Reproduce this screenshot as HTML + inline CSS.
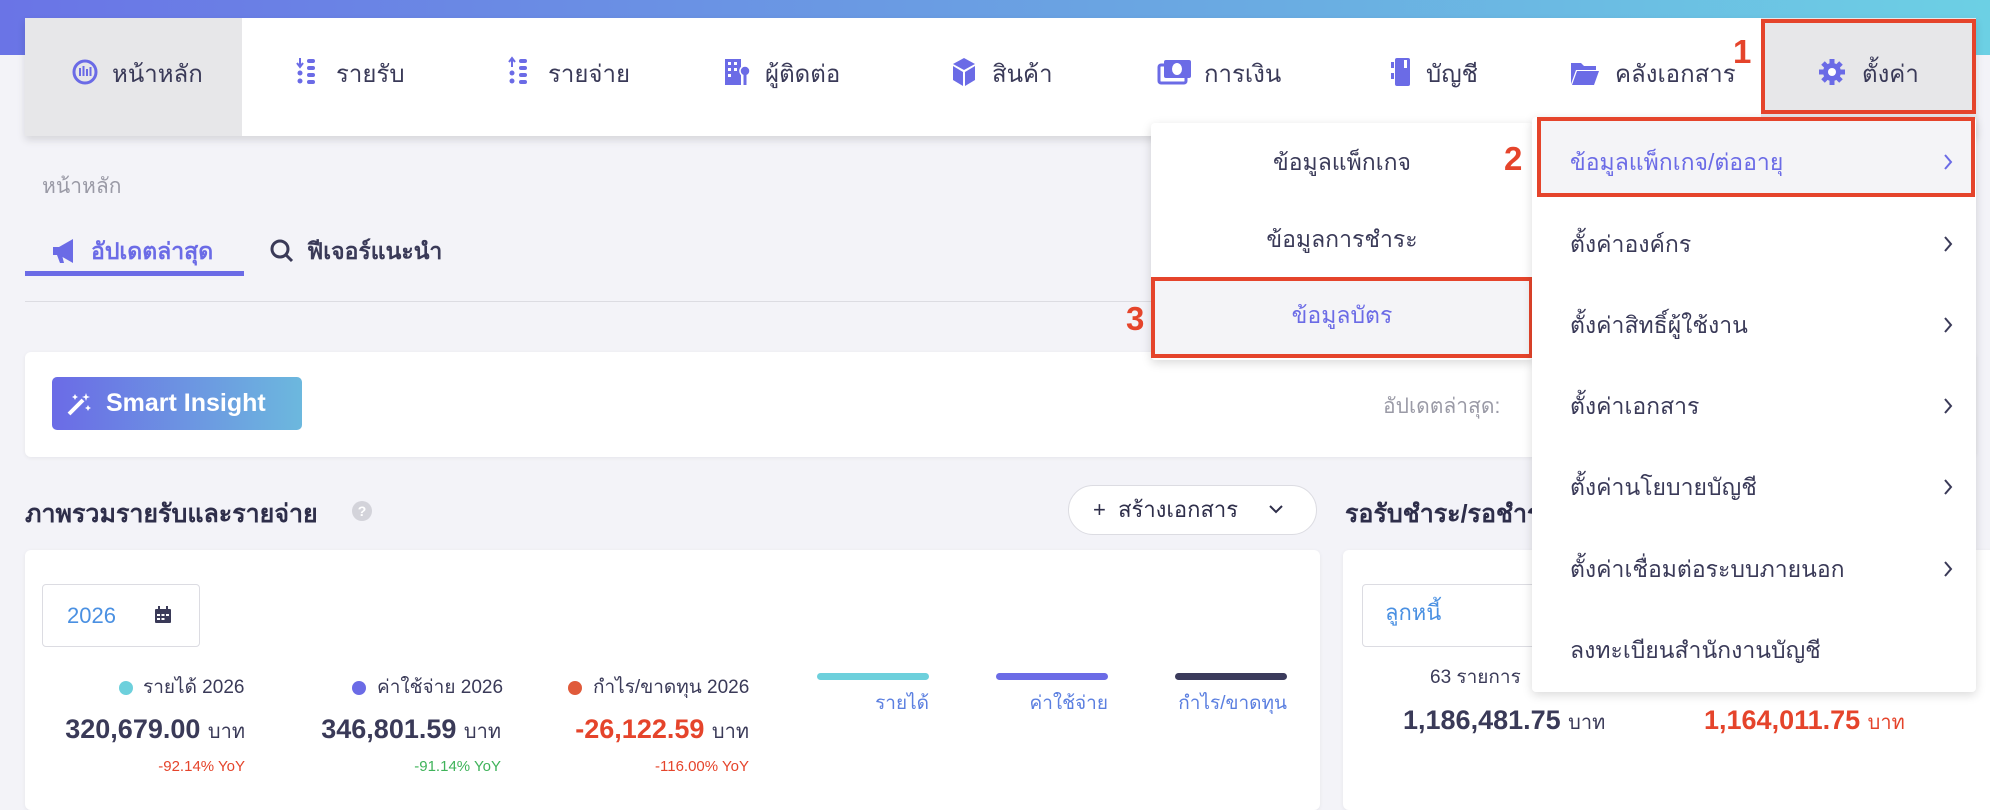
<!DOCTYPE html>
<html><head><meta charset="utf-8"><style>
*{box-sizing:border-box;margin:0;padding:0}
body{width:1990px;height:784px;overflow:hidden;background:#f3f3f8;font-family:"Liberation Sans","Noto Sans CJK SC",sans-serif;color:#3a3a58;position:relative}
.a{position:absolute}
.top{left:0;top:0;width:1990px;height:55px;background:linear-gradient(90deg,#6a74e6,#6aa8e2 60%,#6cd0e4)}
.nav{left:25px;top:18px;width:1951px;height:118px;background:#fff;box-shadow:0 4px 8px rgba(0,0,0,.12)}
.ni{top:57px;font-size:24px;line-height:36px;color:#3a3a58;white-space:nowrap}
.red{border:4px solid #e5442b}
.num{color:#e5442b;font-weight:bold;font-size:33px;line-height:33px}
.dd{background:#fff;box-shadow:0 3px 10px rgba(0,0,0,.15);border-radius:4px}
.mi{font-size:23px;color:#3a3a58;white-space:nowrap;line-height:32px}
.card{background:#fff;border-radius:6px;box-shadow:0 1px 4px rgba(0,0,0,.06)}
.lbl{font-size:19px;color:#3a3a58;white-space:nowrap;line-height:24px}
.val{font-size:27px;font-weight:bold;color:#3a3a58;white-space:nowrap;line-height:32px}
.val span{font-weight:normal;font-size:20px}
.yoy{font-size:15px;white-space:nowrap;line-height:20px}
.dot{width:14px;height:14px;border-radius:50%}
.cv{position:absolute;left:1942px;width:12px;height:20px}
</style></head><body>
<div class="a top"></div>
<div class="a nav"></div>
<div class="a" style="left:25px;top:18px;width:217px;height:118px;background:#e7e7e9"></div>
<div class="a" style="left:1761px;top:18px;width:215px;height:118px;background:#e7e7e9"></div>

<svg class="a" style="left:71px;top:56px" width="28" height="32" viewBox="0 0 28 32"><circle cx="14" cy="16" r="11" fill="none" stroke="#6b6be6" stroke-width="3"/><path d="M9 12v8M12.5 10v10M16 13v7M19.5 11v9" stroke="#6b6be6" stroke-width="2"/></svg>
<svg class="a" style="left:296px;top:56px" width="22" height="32" viewBox="0 0 22 32"><path d="M4 2v8M1 7l3 4 3-4" stroke="#6b6be6" stroke-width="2" fill="none"/><g fill="#6b6be6"><circle cx="4" cy="17" r="2.5"/><circle cx="4" cy="25" r="2.5"/><rect x="11" y="3" width="8" height="4" rx="2"/><rect x="11" y="10" width="8" height="4" rx="2"/><rect x="11" y="17" width="8" height="4" rx="2"/><rect x="11" y="24" width="8" height="4" rx="2"/></g></svg>
<svg class="a" style="left:508px;top:56px" width="22" height="32" viewBox="0 0 22 32"><path d="M4 11V3M1 6l3-4 3 4" stroke="#6b6be6" stroke-width="2" fill="none"/><g fill="#6b6be6"><circle cx="4" cy="17" r="2.5"/><circle cx="4" cy="25" r="2.5"/><rect x="11" y="3" width="8" height="4" rx="2"/><rect x="11" y="10" width="8" height="4" rx="2"/><rect x="11" y="17" width="8" height="4" rx="2"/><rect x="11" y="24" width="8" height="4" rx="2"/></g></svg>
<svg class="a" style="left:724px;top:57px" width="28" height="30" viewBox="0 0 28 30"><rect x="1" y="2" width="16" height="26" fill="#6b6be6"/><g fill="#fff"><rect x="4" y="5" width="3" height="3"/><rect x="10" y="5" width="3" height="3"/><rect x="4" y="11" width="3" height="3"/><rect x="10" y="11" width="3" height="3"/><rect x="4" y="17" width="3" height="3"/></g><circle cx="21" cy="14" r="5" fill="#6b6be6" stroke="#fff" stroke-width="1.5"/><path d="M21 18v10" stroke="#6b6be6" stroke-width="3"/></svg>
<svg class="a" style="left:951px;top:57px" width="26" height="30" viewBox="0 0 26 30"><path d="M13 1L24 7 13 13 2 7z" fill="#6b6be6"/><path d="M2 9l10 6v14L2 23z M24 9l-10 6v14l10-6z" fill="#6b6be6"/></svg>
<svg class="a" style="left:1157px;top:58px" width="36" height="28" viewBox="0 0 36 28"><rect x="7" y="2" width="27" height="18" rx="2" fill="#6b6be6"/><rect x="2" y="7" width="27" height="18" rx="2" fill="none" stroke="#6b6be6" stroke-width="3"/><ellipse cx="20" cy="11" rx="5" ry="6" fill="#fff"/></svg>
<svg class="a" style="left:1390px;top:57px" width="22" height="30" viewBox="0 0 22 30"><rect x="5" y="1" width="15" height="28" rx="2" fill="#6b6be6"/><rect x="1" y="5" width="3" height="6" fill="#6b6be6"/><rect x="1" y="16" width="3" height="6" fill="#6b6be6"/><rect x="14" y="3" width="3" height="8" fill="#fff"/></svg>
<svg class="a" style="left:1570px;top:60px" width="30" height="26" viewBox="0 0 30 26"><path d="M1 3h10l3 3h12v4H6L1 24z" fill="#6b6be6"/><path d="M7 11h22l-5 14H2z" fill="#6b6be6"/></svg>
<svg class="a" style="left:1818px;top:58px" width="28" height="28" viewBox="0 0 28 28"><circle cx="14" cy="14" r="9" fill="#6b6be6"/><g stroke="#6b6be6" stroke-width="5"><path d="M14 1v26M1 14h26M5 5l18 18M23 5L5 23"/></g><circle cx="14" cy="14" r="4" fill="#fff"/></svg>

<div class="a ni" style="left:112px">หน้าหลัก</div>
<div class="a ni" style="left:336px">รายรับ</div>
<div class="a ni" style="left:548px">รายจ่าย</div>
<div class="a ni" style="left:765px">ผู้ติดต่อ</div>
<div class="a ni" style="left:992px">สินค้า</div>
<div class="a ni" style="left:1204px">การเงิน</div>
<div class="a ni" style="left:1426px">บัญชี</div>
<div class="a ni" style="left:1615px">คลังเอกสาร</div>
<div class="a ni" style="left:1862px">ตั้งค่า</div>

<div class="a" style="left:42px;top:170px;font-size:21px;color:#9a9aa6">หน้าหลัก</div>
<svg class="a" style="left:51px;top:237px" width="28" height="28" viewBox="0 0 28 28"><path d="M2 10h6l14-8v24L8 18H2z" fill="#6b6be6"/><path d="M6 18l3 8h4l-2-8z" fill="#6b6be6"/></svg>
<div class="a" style="left:91px;top:234px;font-size:23px;font-weight:bold;color:#6b6be6">อัปเดตล่าสุด</div>
<svg class="a" style="left:269px;top:238px" width="26" height="26" viewBox="0 0 26 26"><circle cx="11" cy="11" r="8" fill="none" stroke="#3a3a58" stroke-width="3"/><path d="M17 17l6 6" stroke="#3a3a58" stroke-width="3"/></svg>
<div class="a" style="left:307px;top:234px;font-size:23px;font-weight:bold;color:#3a3a58">ฟีเจอร์แนะนำ</div>
<div class="a" style="left:25px;top:271px;width:219px;height:5px;background:#6b6be6"></div>
<div class="a" style="left:25px;top:301px;width:1951px;height:1px;background:#dcdce2"></div>

<div class="a card" style="left:25px;top:352px;width:1951px;height:105px"></div>
<div class="a" style="left:52px;top:377px;width:250px;height:53px;border-radius:5px;background:linear-gradient(90deg,#6b6be6,#6cb8de)"></div>
<svg class="a" style="left:66px;top:391px" width="26" height="26" viewBox="0 0 26 26"><path d="M3 23L17 9" stroke="#fff" stroke-width="4"/><path d="M20 2l1 3 3 1-3 1-1 3-1-3-3-1 3-1zM9 3l1 2 2 1-2 1-1 2-1-2-2-1 2-1zM22 14l1 2 2 1-2 1-1 2-1-2-2-1 2-1z" fill="#fff"/></svg>
<div class="a" style="left:106px;top:389px;font-size:25px;font-weight:bold;color:#fff">Smart Insight</div>
<div class="a" style="left:1383px;top:390px;font-size:21px;color:#9a9aa6">อัปเดตล่าสุด:</div>

<div class="a" style="left:25px;top:494px;font-size:25px;font-weight:bold;color:#2e2e4a">ภาพรวมรายรับและรายจ่าย</div>
<div class="a" style="left:352px;top:501px;width:20px;height:20px;border-radius:50%;background:#d3d3da;color:#fff;font-size:14px;text-align:center;line-height:20px;font-weight:bold">?</div>
<div class="a" style="left:1068px;top:485px;width:249px;height:50px;border-radius:25px;background:#fff;border:1px solid #dcdce2;font-size:22px;line-height:48px;padding-left:24px;color:#2e2e4a">+&nbsp; สร้างเอกสาร</div>
<svg class="a" style="left:1268px;top:503px" width="16" height="12" viewBox="0 0 16 12"><path d="M2 3l6 6 6-6" fill="none" stroke="#2e2e4a" stroke-width="2"/></svg>
<div class="a" style="left:1345px;top:494px;font-size:25px;font-weight:bold;color:#2e2e4a;white-space:nowrap">รอรับชำระ/รอชำระ</div>

<div class="a card" style="left:25px;top:550px;width:1295px;height:260px"></div>
<div class="a" style="left:42px;top:584px;width:158px;height:63px;border:1px solid #dcdce2;border-radius:4px;font-size:22px;color:#4a90e2;line-height:61px;padding-left:24px">2026</div>
<svg class="a" style="left:154px;top:606px" width="18" height="18" viewBox="0 0 18 18"><rect x="1" y="3" width="16" height="14" rx="1" fill="#3a3a58"/><rect x="4" y="0" width="2" height="4" fill="#3a3a58"/><rect x="12" y="0" width="2" height="4" fill="#3a3a58"/><g fill="#fff"><rect x="3" y="8" width="3" height="2"/><rect x="7.5" y="8" width="3" height="2"/><rect x="12" y="8" width="3" height="2"/><rect x="3" y="12" width="3" height="2"/><rect x="7.5" y="12" width="3" height="2"/></g></svg>

<div class="a dot" style="left:119px;top:681px;background:#6dd0dc"></div>
<div class="a lbl" style="left:143px;top:676px">รายได้ 2026</div>
<div class="a val" style="left:58px;top:713px;width:187px;text-align:right">320,679.00 <span>บาท</span></div>
<div class="a yoy" style="left:100px;top:757px;width:145px;text-align:right;color:#e5442b">-92.14% YoY</div>

<div class="a dot" style="left:352px;top:681px;background:#6b6be6"></div>
<div class="a lbl" style="left:377px;top:676px">ค่าใช้จ่าย 2026</div>
<div class="a val" style="left:300px;top:713px;width:201px;text-align:right">346,801.59 <span>บาท</span></div>
<div class="a yoy" style="left:350px;top:757px;width:151px;text-align:right;color:#3fb35a">-91.14% YoY</div>

<div class="a dot" style="left:568px;top:681px;background:#e05a3a"></div>
<div class="a lbl" style="left:593px;top:676px">กำไร/ขาดทุน 2026</div>
<div class="a val" style="left:540px;top:713px;width:209px;text-align:right;color:#e5442b">-26,122.59 <span style="color:#3a3a58">บาท</span></div>
<div class="a yoy" style="left:600px;top:757px;width:149px;text-align:right;color:#e5442b">-116.00% YoY</div>

<div class="a" style="left:817px;top:673px;width:112px;height:7px;border-radius:4px;background:#6dd0dc"></div>
<div class="a" style="left:996px;top:673px;width:112px;height:7px;border-radius:4px;background:#6b6be6"></div>
<div class="a" style="left:1175px;top:673px;width:112px;height:7px;border-radius:4px;background:#3b3b5c"></div>
<div class="a lbl" style="left:800px;top:692px;width:129px;text-align:right;color:#5b7fe0">รายได้</div>
<div class="a lbl" style="left:979px;top:692px;width:129px;text-align:right;color:#5b7fe0">ค่าใช้จ่าย</div>
<div class="a lbl" style="left:1140px;top:692px;width:147px;text-align:right;color:#5b7fe0">กำไร/ขาดทุน</div>

<div class="a card" style="left:1343px;top:550px;width:700px;height:260px"></div>
<div class="a" style="left:1362px;top:584px;width:250px;height:63px;border:1px solid #dcdce2;border-radius:4px;font-size:22px;color:#4a90e2;line-height:56px;padding-left:22px">ลูกหนี้</div>
<div class="a lbl" style="left:1430px;top:666px">63 รายการ</div>
<div class="a val" style="left:1403px;top:704px">1,186,481.75 <span>บาท</span></div>
<div class="a val" style="left:1704px;top:704px;color:#e5442b">1,164,011.75 <span style="color:#e5442b">บาท</span></div>

<div class="a dd" style="left:1151px;top:123px;width:382px;height:237px"></div>
<div class="a mi" style="left:1151px;top:146px;width:382px;text-align:center">ข้อมูลแพ็กเกจ</div>
<div class="a mi" style="left:1151px;top:223px;width:382px;text-align:center">ข้อมูลการชำระ</div>
<div class="a" style="left:1151px;top:277px;width:382px;height:81px;background:#f4f4f7"></div>
<div class="a mi" style="left:1151px;top:299px;width:382px;text-align:center;color:#6b6be6">ข้อมูลบัตร</div>
<div class="a red" style="left:1151px;top:277px;width:382px;height:81px"></div>

<div class="a dd" style="left:1532px;top:117px;width:444px;height:575px"></div>
<div class="a" style="left:1537px;top:117px;width:438px;height:80px;background:#f4f4f7"></div>
<div class="a mi" style="left:1570px;top:146px;color:#6b6be6">ข้อมูลแพ็กเกจ/ต่ออายุ</div>
<svg class="cv" style="top:152px" viewBox="0 0 12 20"><path d="M3 3l6 7-6 7" fill="none" stroke="#6b6be6" stroke-width="2"/></svg>
<div class="a mi" style="left:1570px;top:228px">ตั้งค่าองค์กร</div>
<svg class="cv" style="top:234px" viewBox="0 0 12 20"><path d="M3 3l6 7-6 7" fill="none" stroke="#3a3a58" stroke-width="2"/></svg>
<div class="a mi" style="left:1570px;top:309px">ตั้งค่าสิทธิ์ผู้ใช้งาน</div>
<svg class="cv" style="top:315px" viewBox="0 0 12 20"><path d="M3 3l6 7-6 7" fill="none" stroke="#3a3a58" stroke-width="2"/></svg>
<div class="a mi" style="left:1570px;top:390px">ตั้งค่าเอกสาร</div>
<svg class="cv" style="top:396px" viewBox="0 0 12 20"><path d="M3 3l6 7-6 7" fill="none" stroke="#3a3a58" stroke-width="2"/></svg>
<div class="a mi" style="left:1570px;top:471px">ตั้งค่านโยบายบัญชี</div>
<svg class="cv" style="top:477px" viewBox="0 0 12 20"><path d="M3 3l6 7-6 7" fill="none" stroke="#3a3a58" stroke-width="2"/></svg>
<div class="a mi" style="left:1570px;top:553px">ตั้งค่าเชื่อมต่อระบบภายนอก</div>
<svg class="cv" style="top:559px" viewBox="0 0 12 20"><path d="M3 3l6 7-6 7" fill="none" stroke="#3a3a58" stroke-width="2"/></svg>
<div class="a mi" style="left:1570px;top:634px">ลงทะเบียนสำนักงานบัญชี</div>
<div class="a red" style="left:1537px;top:117px;width:438px;height:80px"></div>

<div class="a red" style="left:1761px;top:19px;width:215px;height:95px"></div>
<div class="a num" style="left:1733px;top:35px">1</div>
<div class="a num" style="left:1504px;top:142px">2</div>
<div class="a num" style="left:1126px;top:302px">3</div>
</body></html>
